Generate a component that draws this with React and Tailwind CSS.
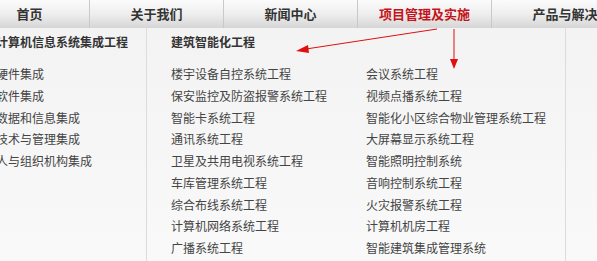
import React from 'react';

const navItems = ['首页', '关于我们', '新闻中心', '项目管理及实施', '产品与解决方案'];

const col1 = ['硬件集成', '软件集成', '数据和信息集成', '技术与管理集成', '人与组织机构集成'];

const col2 = [
  '楼宇设备自控系统工程',
  '保安监控及防盗报警系统工程',
  '智能卡系统工程',
  '通讯系统工程',
  '卫星及共用电视系统工程',
  '车库管理系统工程',
  '综合布线系统工程',
  '计算机网络系统工程',
  '广播系统工程',
];

const col3 = [
  '会议系统工程',
  '视频点播系统工程',
  '智能化小区综合物业管理系统工程',
  '大屏幕显示系统工程',
  '智能照明控制系统',
  '音响控制系统工程',
  '火灾报警系统工程',
  '计算机机房工程',
  '智能建筑集成管理系统',
];

const font = { fontFamily: '"Noto Sans CJK SC", "Noto Sans", sans-serif' };

export default function App() {
  return (
    <div className="relative w-[597px] h-[261px] overflow-hidden bg-[#f6f6f6]" style={font}>
      {/* top nav */}
      <div className="flex h-[28px] bg-gradient-to-b from-[#fbfbfb] via-[#eeeeee] to-[#d6d6d6] whitespace-nowrap">
        <div className="shrink-0 w-[120px] -ml-[30px] flex items-center justify-center text-[13px] font-bold text-[#333] border-r border-[#c9c9c9]">
          {navItems[0]}
        </div>
        {navItems.slice(1, 4).map((item, i) => (
          <div
            key={item}
            className={`shrink-0 w-[134px] flex items-center justify-center text-[13px] font-bold border-r border-[#c9c9c9] ${
              i === 2 ? 'text-[#c4141b]' : 'text-[#333]'
            }`}
          >
            {item}
          </div>
        ))}
        <div className="shrink-0 w-[172px] flex items-center justify-center text-[13px] font-bold text-[#333]">
          {navItems[4]}
        </div>
      </div>

      {/* dropdown panel */}
      <div className="flex h-[233px] bg-gradient-to-b from-[#f3f3f3] to-[#f9f9f9] text-[12px] text-[#444]">
        <div className="w-[151px] shrink-0 border-r border-[#dcdcdc] -ml-[4px] pt-[3px] whitespace-nowrap overflow-hidden">
          <div className="leading-[22px] font-bold text-[#333]">计算机信息系统集成工程</div>
          <div className="mt-[10px] leading-[21.75px]">
            {col1.map((t) => (
              <div key={t}>{t}</div>
            ))}
          </div>
        </div>
        <div className="w-[419px] shrink-0 border-r border-[#dcdcdc] pl-[24px] pt-[3px] whitespace-nowrap">
          <div className="leading-[22px] font-bold text-[#333]">建筑智能化工程</div>
          <div className="mt-[10px] flex leading-[21.75px]">
            <div className="w-[195px]">
              {col2.map((t) => (
                <div key={t}>{t}</div>
              ))}
            </div>
            <div>
              {col3.map((t) => (
                <div key={t}>{t}</div>
              ))}
            </div>
          </div>
        </div>
      </div>

      {/* red annotation arrows */}
      <svg className="absolute left-0 top-0 pointer-events-none" width="597" height="261">
        <line x1="437" y1="29" x2="306" y2="49" stroke="#e01010" strokeWidth="1" />
        <polygon points="296,51 308,45 309,53" fill="#e01010" />
        <line x1="454" y1="29" x2="454" y2="60" stroke="#e01010" strokeWidth="1" />
        <polygon points="450,59 458,59 454,69" fill="#e01010" />
      </svg>
    </div>
  );
}
